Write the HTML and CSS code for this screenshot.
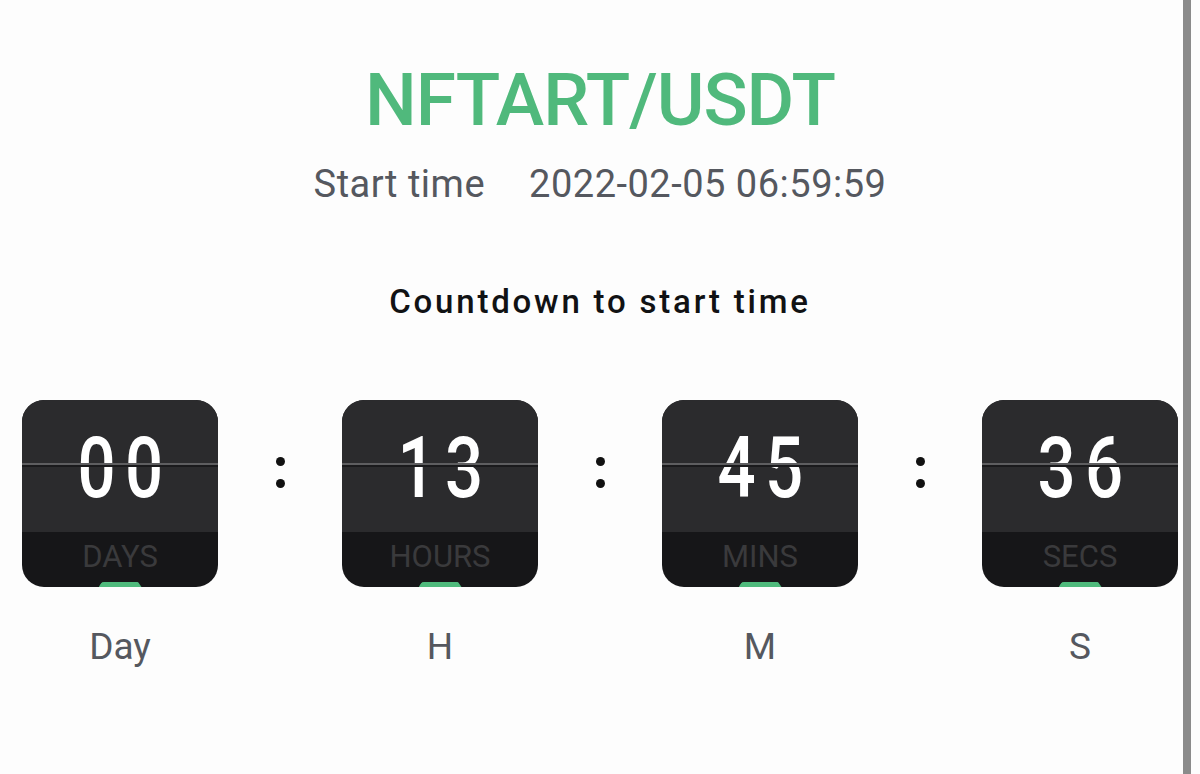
FILE: index.html
```html
<!DOCTYPE html>
<html lang="en">
<head>
<meta charset="utf-8">
<title>NFTART/USDT</title>
<link rel="stylesheet" href="styles.css">
</head>
<body>
<div class="screen">
  <main class="page">
    <h1 class="title">NFTART/USDT</h1>
    <div class="start-row">
      <span class="start-label">Start time</span>
      <span class="start-value">2022-02-05 06:59:59</span>
    </div>
    <h2 class="countdown-title">Countdown to start time</h2>
    <div class="timer">
      <div class="unit">
        <div class="card">
          <div class="card-top"><span class="digits">00</span><span class="split"></span></div>
          <div class="card-bottom"><span class="card-label">DAYS</span><span class="tab"></span></div>
        </div>
        <div class="unit-label">Day</div>
      </div>
      <div class="colon"><span class="dot"></span><span class="dot"></span></div>
      <div class="unit">
        <div class="card">
          <div class="card-top"><span class="digits">13</span><span class="split"></span></div>
          <div class="card-bottom"><span class="card-label">HOURS</span><span class="tab"></span></div>
        </div>
        <div class="unit-label">H</div>
      </div>
      <div class="colon"><span class="dot"></span><span class="dot"></span></div>
      <div class="unit">
        <div class="card">
          <div class="card-top"><span class="digits">45</span><span class="split"></span></div>
          <div class="card-bottom"><span class="card-label">MINS</span><span class="tab"></span></div>
        </div>
        <div class="unit-label">M</div>
      </div>
      <div class="colon"><span class="dot"></span><span class="dot"></span></div>
      <div class="unit">
        <div class="card">
          <div class="card-top"><span class="digits">36</span><span class="split"></span></div>
          <div class="card-bottom"><span class="card-label">SECS</span><span class="tab"></span></div>
        </div>
        <div class="unit-label">S</div>
      </div>
    </div>
  </main>
  <div class="scrollbar"></div>
  <div class="edge"></div>
</div>
</body>
</html>
```

FILE: styles.css
```css
html, body {
  margin: 0;
  padding: 0;
  background: #fdfdfd;
}
body {
  font-family: Roboto, "Noto Sans", sans-serif;
}
.screen {
  display: flex;
  width: 1200px;
  height: 774px;
  overflow: hidden;
}
.page {
  width: 1183px;
  display: flex;
  flex-direction: column;
  align-items: center;
  padding-left: 17px;
  box-sizing: border-box;
}
.scrollbar {
  width: 8px;
  background: #8b8b8b;
  flex: none;
}
.edge {
  width: 9px;
  flex: none;
  background: #fdfdfd;
}
.title {
  margin: 64px 0 0;
  font-size: 73px;
  line-height: 73px;
  font-weight: 500;
  color: #50b97c;
  letter-spacing: -1px;
}
.start-row {
  margin-top: 28px;
  display: flex;
  gap: 44px;
  font-size: 38px;
  line-height: 38px;
  color: #55585f;
  letter-spacing: 0.5px;
}
.countdown-title {
  margin: 83px 0 0;
  font-size: 33px;
  line-height: 32px;
  font-weight: 500;
  color: #111214;
  letter-spacing: 2.8px;
}
.timer {
  margin-top: 82px;
  display: flex;
  align-items: flex-start;
}
.unit {
  width: 196px;
  display: flex;
  flex-direction: column;
  align-items: center;
}
.card {
  width: 196px;
  height: 187px;
  border-radius: 22px;
  overflow: hidden;
  display: flex;
  flex-direction: column;
  background: #161618;
}
.card-top {
  position: relative;
  height: 132px;
  background: #2b2b2d;
  display: flex;
  justify-content: center;
  box-sizing: border-box;
}
.digits {
  display: inline-block;
  font-size: 85px;
  line-height: 136px;
  height: 132px;
  font-weight: 500;
  color: #ffffff;
  letter-spacing: 12px;
  padding-left: 12px;
  transform: scaleX(0.79);
  transform-origin: center;
}
.split {
  position: absolute;
  left: 0;
  right: 0;
  top: 63px;
  height: 2px;
  background: #5e5e60;
  box-shadow: 0 2px 0 #1a1a1c;
}
.card-bottom {
  flex: 1;
  display: flex;
  flex-direction: column;
  align-items: center;
  justify-content: space-between;
  padding-top: 9px;
}
.card-label {
  font-size: 31px;
  line-height: 31px;
  color: #3a3a3c;
}
.tab {
  width: 43px;
  height: 5px;
  background: #4fba7c;
  border-radius: 5px 5px 0 0;
  clip-path: polygon(8% 0, 92% 0, 100% 100%, 0 100%);
}
.unit-label {
  margin-top: 42px;
  font-size: 37px;
  line-height: 36px;
  color: #55585f;
}
.colon {
  width: 124px;
  height: 187px;
  box-sizing: border-box;
  padding-top: 57px;
  display: flex;
  flex-direction: column;
  align-items: center;
  gap: 13px;
}
.dot {
  width: 9px;
  height: 9px;
  border-radius: 50%;
  background: #111;
}
```
